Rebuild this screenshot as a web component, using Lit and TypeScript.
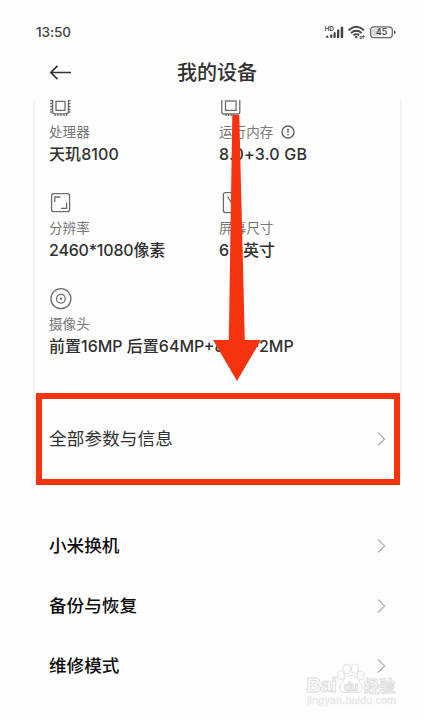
import { LitElement, html, css, svg } from "lit";
import { customElement } from "lit/decorators.js";

const chip = svg`
  <rect x="3.6" y="3" width="15.8" height="15.8" rx="2"/>
  <rect x="7" y="6.4" width="9" height="9"/>
  <path d="M6 .6v2M9 .6v2M12 .6v2M15 .6v2M17.5 .6v2M6 19v2M9 19v2M12 19v2M15 19v2M17.5 19v2M1.2 5.5h2M1.2 8.5h2M1.2 11.5h2M1.2 14.5h2M1.2 17h2M19.5 5.5h2M19.5 8.5h2M19.5 11.5h2M19.5 14.5h2M19.5 17h2"/>`;
const memory = svg`
  <rect x="2.8" y="0" width="18" height="19" rx="2"/>
  <rect x="6.5" y="6" width="10.6" height="9.4"/>
  <path d="M7 19v2M9.5 19v2M12 19v2M14.5 19v2"/>`;
const resolution = svg`
  <rect x="2.6" y="2.6" width="18" height="18" rx="2.2"/>
  <path d="M5.8 11V6h5.5M12 17.4h5.6V11.5"/>`;
const screen = svg`
  <rect x="4.4" y="1.6" width="14" height="20" rx="2"/>
  <path d="M8.6 5.5l6 10"/>`;
const camera = svg`
  <circle cx="11.9" cy="11.7" r="10"/><circle cx="11.9" cy="11.7" r="4.4"/>
  <circle cx="11.9" cy="11.7" r=".5"/>`;

const icon = (shape: unknown) => html`<svg class="icon" viewBox="0 0 23 23">${shape}</svg>`;
const chevron = html`<svg class="chevron" viewBox="0 0 9 16"><path d="M1 1.5L7.6 8L1 14.5"/></svg>`;

@customElement("app-root")
export class AppRoot extends LitElement {
  static styles = css`
    :host {
      display: block; position: relative; width: 424px; height: 718px; overflow: hidden;
      background: #fefefe; color: #303030;
      font-family: Inter, "Noto Sans CJK SC", sans-serif;
    }
    svg { display: block; flex: none; }
    .status { display: flex; align-items: center; justify-content: space-between; height: 48px; padding: 16px 26px 0 36px; box-sizing: border-box; }
    .time { font-size: 13.6px; line-height: 20px; color: #444; font-weight: 500; letter-spacing: -.12px; }
    .signals { width: 73px; height: 20px; }
    .bar { display: flex; align-items: center; height: 52px; padding-left: 49px; box-sizing: border-box; padding-bottom: 4px; }
    .back { width: 22px; height: 18px; fill: none; stroke: #333; stroke-width: 1.7; }
    .title { margin: 2px 0 0 106px; font-size: 20px; line-height: 30px; font-weight: 500; }
    .scroll { height: 618px; overflow: hidden; }
    .card { width: 369px; height: 384px; margin-left: 33px; box-sizing: border-box; border: solid #f3f3f3; border-width: 0 2px 2px; border-radius: 0 0 10px 10px; overflow: hidden; }
    .specs { display: grid; grid-template-columns: 170px 1fr; grid-auto-rows: 96px; margin-top: -5px; padding-left: 14px; height: 288px; }
    .wide { grid-column: 1 / 3; }
    .icon { width: 23px; height: 23px; fill: none; stroke: #6c6c6c; stroke-width: 1.3; }
    .label { display: flex; align-items: center; gap: 8px; margin-top: 4px; height: 20px; font-size: 13.6px; line-height: 20px; color: #777; white-space: nowrap; }
    .value { height: 24px; font-size: 16px; line-height: 24px; font-weight: 500; white-space: nowrap; }
    .info { width: 14px; height: 14px; fill: none; stroke: #606060; stroke-width: 1.4; }
    .row { display: flex; align-items: center; justify-content: space-between; height: 60px; padding: 0 39px 0 49px; box-sizing: border-box; font-size: 17.6px; font-weight: 500; color: #0c0c0c; }
    .row span { line-height: 26px; margin-bottom: 1px; }
    .all { height: 95px; padding: 5px 14px 0 14px; font-weight: 400; color: #303030; margin-top: 6px; letter-spacing: .12px; }
    .list { padding-top: 32px; }
    .list .chevron { margin-right: -1px; }
    .chevron { width: 9px; height: 16px; fill: none; stroke: #b5b5b5; stroke-width: 1.4; }
    .frame { position: absolute; left: 36px; top: 393px; width: 364px; height: 92px; box-sizing: border-box; border: 6px solid #f5330f; }
    .arrow { position: absolute; left: 213px; top: 115px; width: 48px; height: 267px; fill: #f5330f; }
    .watermark { position: absolute; left: 304px; top: 660px; width: 98px; height: 48px; fill: #fff; stroke: #dedede; stroke-width: 1; font-family: "Liberation Sans", "Noto Sans CJK SC", sans-serif; }
  `;

  spec(shape: unknown, label: unknown, value: string, spacing = 0, wide = false) {
    return html`<div class=${wide ? "wide" : ""}>
      ${icon(shape)}
      <div class="label">${label}</div>
      <div class="value" style="letter-spacing:${spacing}px">${value}</div>
    </div>`;
  }

  render() {
    return html`
      <div class="status">
        <span class="time">13:50</span>
        <svg class="signals" viewBox="325 22 73 20">
          <text x="324.5" y="30.5" font-size="6.5" font-weight="600" fill="#444">HD</text>
          <g fill="#444"><circle cx="327.3" cy="36.8" r="1.2"/><rect x="330.2" y="34.5" width="2.2" height="3.5" rx=".7"/><rect x="333.5" y="32.3" width="2.2" height="5.7" rx=".7"/><rect x="337" y="29.6" width="2.3" height="8.4" rx=".7"/><rect x="340.7" y="26.7" width="2.5" height="11.3" rx=".7"/></g>
          <g fill="none" stroke="#444" stroke-width="1.9"><path d="M348.6 30.2Q356.3 23.4 364 30.2M351 32.9Q356.3 28.5 361.6 32.9M353.4 35.2Q356.3 33 359.2 35.2"/></g>
          <circle cx="356.2" cy="37" r="1.2" fill="#444"/>
          <path d="M359.5 36.5h5l-1.5-1.2M364.3 38h-4.5l1.5 1.2" fill="none" stroke="#555" stroke-width=".9"/>
          <rect x="370.7" y="26.8" width="21.6" height="10.8" rx="3.2" fill="#fff" stroke="#666" stroke-width="1.3"/>
          <path d="M373.5 28.4H379V36h-5.5q-1.3 0-1.3-1.4v-4.8q0-1.4 1.3-1.4z" fill="#d8d8d8"/>
          <path d="M394 30.3q1.6 0 1.6 1.9t-1.6 1.9z" fill="#555"/>
          <text x="381.5" y="35.3" text-anchor="middle" font-size="8.6" font-weight="600" fill="#444">45</text>
        </svg>
      </div>
      <div class="bar">
        <svg class="back" viewBox="0 0 22 18"><path d="M22 9.5H2M8.5 2.8L1.8 9.5l6.7 6.7"/></svg>
        <h1 class="title">我的设备</h1>
      </div>
      <div class="scroll">
        <div class="card">
          <div class="specs">
            ${this.spec(chip, "处理器", "天玑8100", 0.1)}
            ${this.spec(memory, html`运行内存<svg class="info" viewBox="0 0 14 14"><circle cx="7" cy="7" r="6"/><path d="M7 3.4v4.4M7 9.2v1.4"/></svg>`, "8.0+3.0 GB", 0.2)}
            ${this.spec(resolution, "分辨率", "2460*1080像素", -0.2)}
            ${this.spec(screen, "屏幕尺寸", "6.6英寸")}
            ${this.spec(camera, "摄像头", "前置16MP 后置64MP+8MP+2MP", 0, true)}
          </div>
          <div class="row all"><span>全部参数与信息</span>${chevron}</div>
        </div>
        <div class="list">
          ${["小米换机", "备份与恢复", "维修模式"].map((t) => html`<div class="row"><span>${t}</span>${chevron}</div>`)}
        </div>
      </div>
      <svg class="arrow" viewBox="213 115 48 267"><path d="M232.3 115h7L244.8 340H261L237 381L213 340h15.8z"/></svg>
      <div class="frame"></div>
      <svg class="watermark" viewBox="304 660 98 48">
        <text x="306" y="691.5" font-size="21" font-weight="700" textLength="31">Bai</text>
        <ellipse cx="341" cy="675.2" rx="3.4" ry="4.4"/><ellipse cx="347" cy="668.8" rx="3.3" ry="4.7"/><ellipse cx="354.8" cy="668.8" rx="3.3" ry="4.7"/><ellipse cx="360.6" cy="675.2" rx="3.4" ry="4.4"/>
        <path d="M351 675.5C357 675.5 357.5 680.5 360.5 683C364 687 362 693 356 692.5Q351 691.5 346 692.5C339.5 693 337.5 687 341.5 683C344.5 680.5 345 675.5 351 675.5z"/>
        <text x="344" y="690.5" font-size="12" font-weight="700" textLength="14">du</text>
        <text x="364" y="691.5" font-size="16" font-weight="700" textLength="31" lengthAdjust="spacingAndGlyphs">经验</text>
        <text x="307" y="704" font-size="10.5" textLength="89" fill="#e5e5e5" stroke="#e9e9e9" stroke-width=".4">jingyan.baidu.com</text>
      </svg>
    `;
  }
}
